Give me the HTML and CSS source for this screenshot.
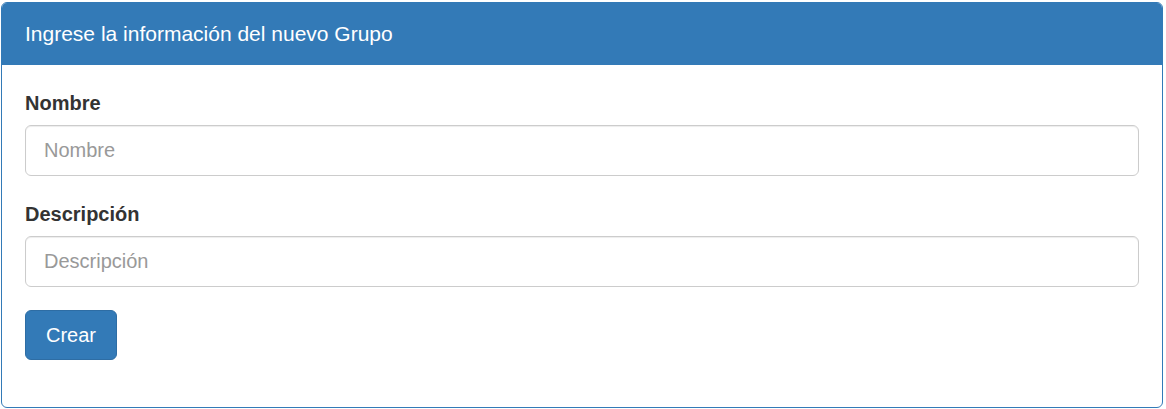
FILE: index.html
```html
<!DOCTYPE html>
<html lang="es">
  <head>
    <meta charset="UTF-8" />
    <meta name="viewport" content="width=device-width, initial-scale=1.0" />
    <title>Nuevo Grupo</title>
    <link rel="stylesheet" href="styles.css">
  </head>
  <body>
    <div class="panel">
      <div class="panel-heading">
        <h3 class="panel-title">Ingrese la información del nuevo Grupo</h3>
      </div>
      <div class="panel-body">
        <form class="group-form">
          <div class="form-group">
            <label for="nombre">Nombre</label>
            <input type="text" id="nombre" class="form-control" placeholder="Nombre">
          </div>
          <div class="form-group">
            <label for="descripcion">Descripción</label>
            <input type="text" id="descripcion" class="form-control" placeholder="Descripción">
          </div>
          <div class="form-actions">
            <button type="submit" class="btn-primary">Crear</button>
          </div>
        </form>
      </div>
    </div>
  </body>
</html>
```

FILE: styles.css
```css
/* page */
body {
  font-family: 'Liberation Sans', Arial, sans-serif;
  margin: 2px 3px 0 1px;
  padding: 0;
  background: #ffffff;
  color: #333333;
}

/* panel */
.panel {
  border: 1px solid #337ab7;
  border-radius: 6px;
  background-color: #ffffff;
  overflow: hidden;
}

.panel-heading {
  background-color: #337ab7;
  color: #ffffff;
  padding: 19px 23px 20px;
}

.panel-title {
  margin: 0;
  font-size: 21px;
  font-weight: normal;
  line-height: 23px;
}

.panel-body {
  padding: 24px 23px;
}

/* form */
.form-group {
  margin-bottom: 24px;
}

.form-group label {
  display: block;
  font-size: 20px;
  font-weight: bold;
  line-height: 28px;
  margin-bottom: 8px;
}

.form-control {
  display: block;
  box-sizing: border-box;
  width: 100%;
  height: 51px;
  padding: 0 18px;
  font-family: inherit;
  font-size: 20px;
  color: #555555;
  border: 1px solid #cccccc;
  border-radius: 6px;
  box-shadow: inset 0 1px 1px rgba(0, 0, 0, 0.075);
  outline: none;
}

.form-control::placeholder {
  color: #999999;
}

.form-group:nth-child(2) {
  margin-bottom: 23px;
}

.form-actions {
  margin-bottom: 23px;
}

/* button */
.btn-primary {
  height: 50px;
  padding: 0 20px;
  font-family: inherit;
  font-size: 20px;
  line-height: 48px;
  color: #ffffff;
  background-color: #337ab7;
  border: 1px solid #2e6da4;
  border-radius: 6px;
  cursor: pointer;
}
```
